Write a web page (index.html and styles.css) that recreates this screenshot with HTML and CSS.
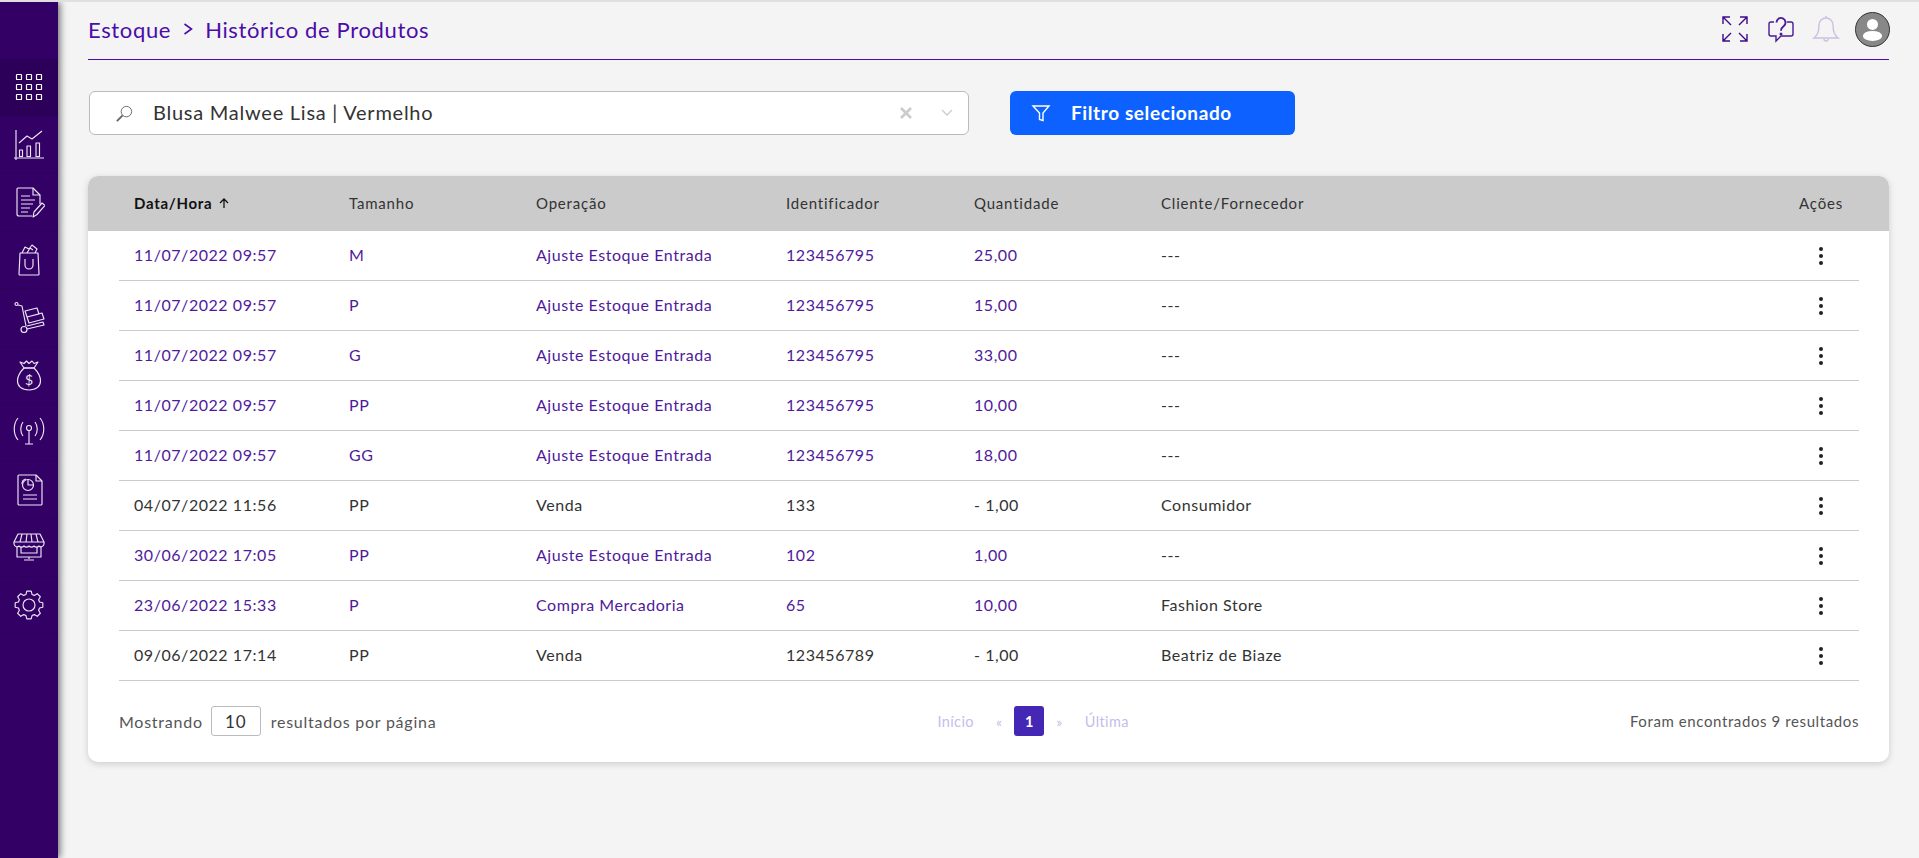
FILE: index.html
```html
<!DOCTYPE html>
<html lang="pt-BR">
<head>
<meta charset="utf-8">
<title>Histórico de Produtos</title>
<link rel="stylesheet" href="styles.css">
</head>
<body>
<div class="app">
  <nav class="sidebar">
    <a class="nav-item active"><svg class="nav-icon" viewBox="0 0 32 32"><g fill="none" stroke="#fff" stroke-width="1.200"><rect x="3.500" y="3.500" width="5" height="5" rx=".6"/><rect x="13.500" y="3.500" width="5" height="5" rx=".6"/><rect x="23.500" y="3.500" width="5" height="5" rx=".6"/><rect x="3.500" y="13.500" width="5" height="5" rx=".6"/><rect x="13.500" y="13.500" width="5" height="5" rx=".6"/><rect x="23.500" y="13.500" width="5" height="5" rx=".6"/><rect x="3.500" y="23.500" width="5" height="5" rx=".6"/><rect x="13.500" y="23.500" width="5" height="5" rx=".6"/><rect x="23.500" y="23.500" width="5" height="5" rx=".6"/></g></svg></a>
    <a class="nav-item"><svg class="nav-icon" viewBox="0 0 32 32"><g class="nav-stroke"><path d="M3 1v30M1 29h30"/><rect x="6.500" y="21" width="3" height="6.500"/><rect x="14" y="17" width="3.500" height="10.500"/><rect x="23" y="14" width="3.500" height="13.500"/><path d="M6 14l8-7 5 3 10-8"/></g></svg></a>
    <a class="nav-item"><svg class="nav-icon" viewBox="0 0 32 32"><g class="nav-stroke"><path d="M19 30H6a2 2 0 0 1-2-2V3a1 1 0 0 1 1-1h15l7 7v9"/><path d="M20 2v7h7"/><path d="M8 10h9M8 14h14M8 18h12M8 22h9M8 26h7"/><path d="M20 31l1-5 8-9 3 2.500-8 9z"/></g></svg></a>
    <a class="nav-item"><svg class="nav-icon" viewBox="0 0 32 32"><g class="nav-stroke"><path d="M7 9L6 30a1 1 0 0 0 1 1h18a1 1 0 0 0 1-1L25 9z"/><path d="M12 15v6a4 4 0 0 0 8 0v-6"/><path d="M9 9l3-6 4 2 3-4 5 4-2 4M14 9l3-5 3 2"/></g></svg></a>
    <a class="nav-item"><svg class="nav-icon" viewBox="0 0 32 32"><g class="nav-stroke"><circle cx="3.500" cy="3" r="1.500"/><path d="M5 4l4 1 4 20"/><circle cx="11" cy="28.500" r="3"/><path d="M14 28l17-4-1-3-16 4"/><path d="M12 10l12-3 2 6-12 3zM14 16l15-4 2 6-15 4z"/></g></svg></a>
    <a class="nav-item"><svg class="nav-icon" viewBox="0 0 32 32"><g class="nav-stroke"><path d="M11 9L7 3l4 1.500L13.500 2 16 4.500 19 2l2 2.500L25 3l-4 6"/><path d="M11 9c-3 3-6.500 8-6.500 13 0 5 4 9 11.500 9s11.500-4 11.500-9c0-5-3.500-10-6.500-13z"/><path d="M11 9h10"/></g><text class="dollar" x="16" y="26" text-anchor="middle">$</text></svg></a>
    <a class="nav-item"><svg class="nav-icon" viewBox="0 0 32 32"><g class="nav-stroke"><circle cx="16" cy="12" r="2.500"/><path d="M16 14.500V28M12 28h8"/><path d="M10 6c-3 4-3 10 0 14M22 6c3 4 3 10 0 14M5 2c-5 6-5 16 0 22M27 2c5 6 5 16 0 22"/></g></svg></a>
    <a class="nav-item"><svg class="nav-icon" viewBox="0 0 32 32"><g class="nav-stroke"><path d="M5 2a1 1 0 0 1 1-1h17l6 6v23a1 1 0 0 1-1 1H6a1 1 0 0 1-1-1z"/><path d="M23 1v6h6"/><circle cx="15" cy="11" r="5.500"/><path d="M15 5.500V11h5.500M9 10a5 5 0 0 1 4-5"/><path d="M10 21h14M10 25h14"/></g></svg></a>
    <a class="nav-item"><svg class="nav-icon" viewBox="0 0 32 32"><g class="nav-stroke"><path d="M5 3h22l4 8H1z"/><path d="M1 11v2a3 3 0 0 0 5 2 3.500 3.500 0 0 0 5 0 3.500 3.500 0 0 0 5 0 3.500 3.500 0 0 0 5 0 3.500 3.500 0 0 0 5 0 3 3 0 0 0 5-2v-2"/><path d="M9 3l-2 8M14 3l-1 8M18 3l1 8M23 3l2 8"/><path d="M4 16v10h24V16M8 16v6h16v-6"/><path d="M16 26v2M11 29h10"/></g></svg></a>
    <a class="nav-item"><svg class="nav-icon" viewBox="0 0 32 32"><g class="nav-stroke"><path d="M12.970 5.430L13.810 2.170H18.190L19.030 5.430L21.330 6.380L24.230 4.670L27.330 7.770L25.620 10.670L26.570 12.970L29.830 13.810V18.190L26.570 19.030L25.620 21.330L27.330 24.230L24.230 27.330L21.330 25.620L19.030 26.570L18.190 29.830H13.810L12.970 26.570L10.670 25.620L7.770 27.330L4.670 24.230L6.380 21.330L5.430 19.030L2.170 18.190V13.810L5.430 12.970L6.380 10.670L4.670 7.770L7.770 4.670L10.670 6.380Z"/><circle cx="16" cy="16" r="6"/></g></svg></a>
  </nav>
  <main class="main">
    <header class="topbar">
      <div class="crumbs"><span>Estoque</span><svg class="crumb-sep" viewBox="0 0 10 14"><path d="M1.500 2l7 5-7 5" fill="none" stroke="#4b0ca8" stroke-width="1.600"/></svg><span>Histórico de Produtos</span></div>
      <div class="top-icons">
        <svg class="top-icon" viewBox="0 0 28 28"><g fill="none" stroke="#3f0a8c" stroke-width="1.400"><path d="M2 9V2h7M2 2l8 8M19 2h7v7M26 2l-8 8M2 19v7h7M2 26l8-8M26 19v7h-7M26 26l-8-8"/></g></svg>
        <svg class="top-icon" viewBox="0 0 28 28"><g fill="none" stroke="#4b1a96" stroke-width="1.400"><path d="M7 7H4a2 2 0 0 0-2 2v10a2 2 0 0 0 2 2h5v5l5-5h10a2 2 0 0 0 2-2V9a2 2 0 0 0-2-2h-4"/><path d="M9.500 7.500a4.500 4.500 0 1 1 7.500 3.300c-2 1.600-3 2.400-3 5" stroke-width="1.900"/><circle cx="14" cy="19" r=".8"/></g></svg>
        <svg class="top-icon faint" viewBox="0 0 28 28"><g fill="none" stroke="#cdbfe0" stroke-width="1.400"><path d="M14 3a7 7 0 0 0-7 7c0 8-2 11-5 13h24c-3-2-5-5-5-13a7 7 0 0 0-7-7z"/><path d="M12 24a2 2 0 0 0 4 0M14 1v2"/></g></svg>
        <span class="avatar"><svg viewBox="0 0 36 36"><circle cx="18" cy="12.500" r="6" fill="#fff"/><ellipse cx="18" cy="25" rx="10.500" ry="5.500" fill="#fff"/></svg></span>
      </div>
    </header>
    <section class="filters">
      <div class="search">
        <svg class="search-icon" viewBox="0 0 20 20"><g fill="none" stroke="#666" stroke-width="1"><circle cx="12" cy="8" r="5.500"/><path d="M8 12l-6 6" stroke-width="2"/></g></svg>
        <span class="search-text">Blusa Malwee Lisa | Vermelho</span>
        <svg class="clear-icon" viewBox="0 0 14 14"><path d="M2 2l10 10M12 2L2 12" stroke="#ccc" stroke-width="2.800" fill="none"/></svg>
        <svg class="chev-icon" viewBox="0 0 14 10"><path d="M2 2l5 5 5-5" stroke="#ccc" stroke-width="1.300" fill="none"/></svg>
      </div>
      <button class="filter-btn"><svg class="filter-icon" viewBox="0 0 20 20"><path d="M2 3h16l-6 7v7.500l-3.500-1V10z" fill="none" stroke="#fff" stroke-width="1.400"/></svg><span>Filtro selecionado</span></button>
    </section>
    <section class="card">
      <div class="grid-row head">
        <div class="th-sort">Data/Hora <svg class="sort-arrow" viewBox="0 0 12 12"><path d="M6 11V2M2 6l4-4 4 4" fill="none" stroke="#111" stroke-width="1.300"/></svg></div>
        <div>Tamanho</div><div>Operação</div><div>Identificador</div><div>Quantidade</div><div>Cliente/Fornecedor</div><div class="col-actions">Ações</div>
      </div>
      <div class="rows">
        <div class="grid-row row link"><div>11/07/2022 09:57</div><div>M</div><div>Ajuste Estoque Entrada</div><div>123456795</div><div>25,00</div><div class="dark-cell">---</div><div class="kebab"><i></i><i></i><i></i></div></div>
        <div class="grid-row row link"><div>11/07/2022 09:57</div><div>P</div><div>Ajuste Estoque Entrada</div><div>123456795</div><div>15,00</div><div class="dark-cell">---</div><div class="kebab"><i></i><i></i><i></i></div></div>
        <div class="grid-row row link"><div>11/07/2022 09:57</div><div>G</div><div>Ajuste Estoque Entrada</div><div>123456795</div><div>33,00</div><div class="dark-cell">---</div><div class="kebab"><i></i><i></i><i></i></div></div>
        <div class="grid-row row link"><div>11/07/2022 09:57</div><div>PP</div><div>Ajuste Estoque Entrada</div><div>123456795</div><div>10,00</div><div class="dark-cell">---</div><div class="kebab"><i></i><i></i><i></i></div></div>
        <div class="grid-row row link"><div>11/07/2022 09:57</div><div>GG</div><div>Ajuste Estoque Entrada</div><div>123456795</div><div>18,00</div><div class="dark-cell">---</div><div class="kebab"><i></i><i></i><i></i></div></div>
        <div class="grid-row row"><div>04/07/2022 11:56</div><div>PP</div><div>Venda</div><div>133</div><div>- 1,00</div><div class="dark-cell">Consumidor</div><div class="kebab"><i></i><i></i><i></i></div></div>
        <div class="grid-row row link"><div>30/06/2022 17:05</div><div>PP</div><div>Ajuste Estoque Entrada</div><div>102</div><div>1,00</div><div class="dark-cell">---</div><div class="kebab"><i></i><i></i><i></i></div></div>
        <div class="grid-row row link"><div>23/06/2022 15:33</div><div>P</div><div>Compra Mercadoria</div><div>65</div><div>10,00</div><div class="dark-cell">Fashion Store</div><div class="kebab"><i></i><i></i><i></i></div></div>
        <div class="grid-row row"><div>09/06/2022 17:14</div><div>PP</div><div>Venda</div><div>123456789</div><div>- 1,00</div><div class="dark-cell">Beatriz de Biaze</div><div class="kebab"><i></i><i></i><i></i></div></div>
      </div>
      <footer class="foot">
        <div class="per-page"><span>Mostrando</span><span class="page-size">10</span><span>resultados por página</span></div>
        <div class="pager"><span>Início</span><span class="pg-arrow">«</span><span class="pg-current">1</span><span class="pg-arrow">»</span><span>Última</span></div>
        <div class="total">Foram encontrados 9 resultados</div>
      </footer>
    </section>
  </main>
</div>
</body>
</html>
```
FILE: styles.css
```css
* { box-sizing: border-box; }
html, body { margin: 0; height: 100%; }
body {
  background: #f4f4f4;
  border-top: 2px solid #e0e0e0;
  font-family: "Lato", "Noto Sans", sans-serif;
  color: #333;
  overflow: hidden;
}
.app { display: flex; height: 856px; }
.sidebar {
  width: 58px;
  flex: none;
  background: #330066;
  box-shadow: 2px 0 7px rgba(0, 0, 0, .55);
  padding-top: 57px;
  display: flex;
  flex-direction: column;
}
.nav-item {
  height: 57.500px;
  flex: none;
  display: flex;
  align-items: center;
  justify-content: center;
  border-bottom: 1px solid #2f005e;
}
.nav-item.active { background: #2c0058; }
.nav-icon { width: 32px; height: 32px; display: block; }
.nav-stroke { fill: none; stroke: #eee6f5; stroke-width: 1.150; stroke-linejoin: round; }
.dollar { font: 400 14px "Lato", sans-serif; fill: #eee6f5; }

.main { flex: 1; min-width: 0; padding: 0 30px; }
.topbar {
  height: 58px;
  border-bottom: 1px solid #4b0ca8;
  display: flex;
  align-items: center;
  justify-content: space-between;
}
.crumbs {
  display: flex;
  align-items: center;
  gap: 12px;
  font-size: 22px;
  letter-spacing: .65px;
  color: #4b0ca8;
  margin-top: -3px;
}
.crumb-sep { width: 10px; height: 14px; }
.top-icons { display: flex; align-items: center; gap: 18px; margin: -3px -1px 0 0; }
.top-icon { width: 28px; height: 28px; display: block; }
.top-icon.faint { margin-left: -1px; }
.avatar {
  width: 35px;
  height: 35px;
  border-radius: 50%;
  background: #888;
  border: 1.500px solid #333;
  overflow: hidden;
  display: block;
  margin-left: -3px;
}
.avatar svg { width: 100%; height: 100%; display: block; }

.filters { display: flex; align-items: flex-start; gap: 41px; padding: 31px 0 0 1px; }
.search {
  width: 880px;
  height: 44px;
  background: #fff;
  border: 1px solid #bbb;
  border-radius: 6px;
  display: flex;
  align-items: center;
  padding-left: 25px;
}
.search-icon { width: 19px; height: 19px; flex: none; }
.search-text { flex: 1; margin-left: 19px; font-size: 20px; letter-spacing: .75px; color: #333; margin-top: -2px; }
.clear-icon { width: 14px; height: 14px; margin-right: 27px; }
.chev-icon { width: 14px; height: 10px; margin-right: 14px; }
.filter-btn {
  width: 285px;
  height: 44px;
  background: #0d62ff;
  border: 0;
  border-radius: 6px;
  color: #fff;
  display: flex;
  align-items: center;
  padding: 0 0 2px 21px;
  font: 700 19px "Lato", sans-serif;
  letter-spacing: .6px;
}
.filter-icon { width: 20px; height: 20px; margin-right: 20px; margin-top: 1px; }

.card {
  margin-top: 41px;
  height: 586px;
  background: #fff;
  border-radius: 10px;
  box-shadow: 0 2px 7px rgba(0, 0, 0, .16);
  overflow: hidden;
}
.grid-row {
  display: grid;
  grid-template-columns: 215px 187px 250px 188px 187px 1fr 60px;
  align-items: center;
  padding-left: 15px;
  font-size: 16px;
  letter-spacing: .55px;
}
.head {
  height: 55px;
  background: #cbcbcb;
  padding: 0 31px 2px 46px;
  color: #333;
  font-size: 15px;
  letter-spacing: .8px;
}
.th-sort { font-weight: 700; color: #111; letter-spacing: .7px; display: flex; align-items: center; gap: 6px; }
.sort-arrow { width: 12px; height: 12px; }
.col-actions { text-align: right; padding-right: 15px; }
.rows { margin: 0 30px 0 31px; }
.row { height: 50px; border-bottom: 1px solid #cbcbcb; color: #333; padding-bottom: 3px; }
.row.link { color: #4f1a9c; }
.dark-cell { color: #333; }
.kebab { display: flex; flex-direction: column; align-items: flex-end; gap: 3px; padding-right: 36px; padding-top: 3px; }
.kebab i { width: 4px; height: 4px; border-radius: 50%; background: #222; display: block; }

.foot {
  margin: 0 30px 0 31px;
  height: 80px;
  display: flex;
  justify-content: space-between;
  align-items: center;
  font-size: 16px;
  letter-spacing: .75px;
  color: #555;
}
.per-page { display: flex; align-items: center; gap: 10px; }
.page-size {
  width: 50px;
  height: 30px;
  border: 1px solid #bbb;
  border-radius: 3px;
  display: flex;
  align-items: center;
  justify-content: center;
  font-size: 17px;
  color: #333;
  margin-left: -2px;
}
.pager { display: flex; align-items: center; color: #c5bdea; font-size: 14.500px; letter-spacing: .4px; }
.pg-arrow { font-size: 14px; margin: 0 12px; }
.pg-arrow:nth-child(2) { margin-left: 22px; }
.pg-arrow:nth-child(4) { margin-right: 22px; }
.pg-current {
  width: 30px;
  height: 30px;
  border-radius: 3px;
  background: #4527b5;
  color: #fff;
  font-weight: 700;
  display: flex;
  align-items: center;
  justify-content: center;
}
.total { text-align: right; font-size: 15px; letter-spacing: .6px; }
```
